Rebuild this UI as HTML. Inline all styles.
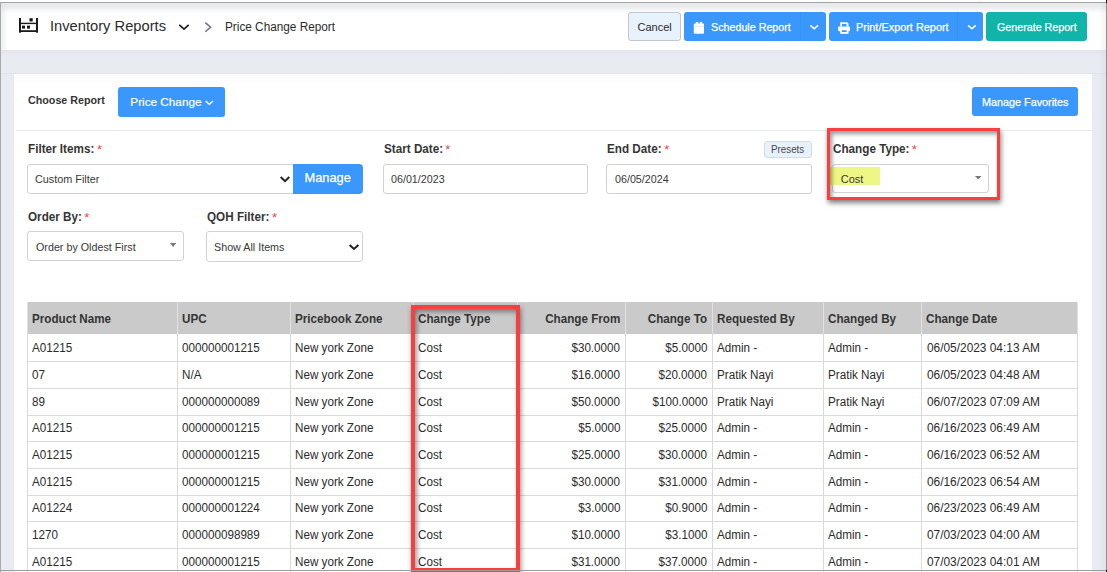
<!DOCTYPE html>
<html><head><meta charset="utf-8">
<style>
*{box-sizing:border-box;margin:0;padding:0}
html,body{width:1107px;height:572px;overflow:hidden;background:#fff}
body{position:relative;font-family:"Liberation Sans",sans-serif;color:#2b2b2b}
.a{position:absolute}
.t{position:absolute;white-space:nowrap;line-height:1}
</style></head><body>
<div class="a" style="left:0px;top:0px;width:1107px;height:572px;background:#fff"></div>
<div class="a" style="left:1px;top:50px;width:1105px;height:522px;background:linear-gradient(#e3e5ed,#e9ebf3 6px,#e9ebf3)"></div>
<div class="a" style="left:1px;top:73px;width:1105px;height:1px;background:#e2e4ea"></div>
<div class="a" style="left:14px;top:74px;width:1078px;height:498px;background:linear-gradient(#fbfbfc,#fff 12px)"></div>
<div class="a" style="left:1px;top:3px;width:1105px;height:10px;background:linear-gradient(rgba(232,234,236,1),rgba(233,234,236,.9) 40%,rgba(255,255,255,0))"></div>
<div class="a" style="left:1099px;top:3px;width:7px;height:567px;background:linear-gradient(90deg,rgba(255,255,255,0),rgba(200,202,206,.25))"></div>
<div class="a" style="left:1px;top:3px;width:7px;height:47px;background:linear-gradient(90deg,rgba(225,228,230,.6),rgba(255,255,255,0))"></div>
<svg class="a" style="left:14px;top:12px" width="30" height="26" viewBox="14 12 30 26">
  <rect x="19" y="18" width="2" height="14.7" fill="#1a1a1a"/>
  <rect x="36" y="18" width="2" height="14.7" fill="#1a1a1a"/>
  <rect x="19" y="22.7" width="19" height="1.4" fill="#1a1a1a"/>
  <rect x="19" y="30.2" width="19" height="1.8" fill="#1a1a1a"/>
  <rect x="29.5" y="18.2" width="3.2" height="3.3" fill="#1a1a1a"/>
  <rect x="22" y="25.6" width="3" height="3" fill="#1a1a1a"/>
  <rect x="27" y="25.6" width="3" height="3" fill="#1a1a1a"/>
</svg>
<div class="t" style="left:50.30px;top:18.00px;font-size:15px;font-weight:normal;color:#2b2b2b;transform:scaleX(0.98);transform-origin:0 0;">Inventory Reports</div>
<svg class="a" style="left:176px;top:21px" width="16" height="12" viewBox="176 21 16 12"><path d="M179.3 24.8 L184 29.2 L188.7 24.8" stroke="#1f1f1f" stroke-width="1.7" fill="none"/></svg>
<svg class="a" style="left:202px;top:20px" width="12" height="14" viewBox="202 20 12 14"><path d="M205.3 22.6 L210.6 27.2 L205.3 31.8" stroke="#6d7083" stroke-width="1.5" fill="none"/></svg>
<div class="t" style="left:225.00px;top:21.00px;font-size:12px;font-weight:normal;color:#2b2b2b;transform:scaleX(0.982);transform-origin:0 0;">Price Change Report</div>
<div class="a" style="left:628px;top:12px;width:53px;height:29px;background:#e8f2fc;border:1px solid #c3c7cc;border-radius:3px"></div>
<div class="t" style="left:637.50px;top:22.00px;font-size:11px;font-weight:normal;color:#2b2b2b;">Cancel</div>
<div class="a" style="left:684px;top:12px;width:142px;height:29px;background:#3a97fc;border-radius:3px"></div>
<svg class="a" style="left:690px;top:18px" width="20" height="20" viewBox="690 18 20 20"><rect x="693.8" y="23.6" width="10.2" height="10.2" rx="1" fill="#fff"/><rect x="695.8" y="22" width="2.4" height="3" fill="#fff"/><rect x="699.8" y="22" width="2.4" height="3" fill="#fff"/><rect x="693.8" y="25.8" width="10.2" height="0.7" fill="#cfe3fb"/></svg>
<div class="t" style="left:710.60px;top:22.00px;font-size:11px;font-weight:normal;color:#fff;transform:scaleX(0.974);transform-origin:0 0;-webkit-text-stroke:0.25px #fff">Schedule Report</div>
<div class="a" style="left:800px;top:12px;width:1px;height:29px;background:#3793f8"></div>
<svg class="a" style="left:806px;top:22px" width="16" height="10" viewBox="806 22 16 10"><path d="M810.4 25.4 L814.2 28.8 L818 25.4" stroke="#fff" stroke-width="1.5" fill="none"/></svg>
<div class="a" style="left:829px;top:12px;width:154px;height:29px;background:#3a97fc;border-radius:3px"></div>
<svg class="a" style="left:836px;top:20px" width="16" height="16" viewBox="836 20 16 16"><path d="M840.2 22.2 H847 L848.5 23.7 V26.5 H840.2 Z" fill="#fff"/><rect x="838.1" y="26.4" width="11.9" height="4.8" rx="1.2" fill="#fff"/><rect x="840.2" y="29.6" width="8.3" height="4.2" fill="#fff"/><rect x="841.9" y="24" width="4.6" height="2.3" fill="#3a97fc"/><rect x="841.9" y="30.2" width="4.7" height="1.8" fill="#3a97fc"/></svg>
<div class="t" style="left:855.60px;top:22.00px;font-size:11px;font-weight:normal;color:#fff;transform:scaleX(0.99);transform-origin:0 0;-webkit-text-stroke:0.25px #fff">Print/Export Report</div>
<div class="a" style="left:957px;top:12px;width:1px;height:29px;background:#3793f8"></div>
<svg class="a" style="left:964px;top:22px" width="16" height="10" viewBox="964 22 16 10"><path d="M968.1 25.4 L971.9 28.8 L975.7 25.4" stroke="#fff" stroke-width="1.5" fill="none"/></svg>
<div class="a" style="left:986px;top:12px;width:101px;height:29px;background:#11b4a9;border-radius:3px"></div>
<div class="t" style="left:996.80px;top:22.00px;font-size:11px;font-weight:normal;color:#fff;transform:scaleX(0.972);transform-origin:0 0;-webkit-text-stroke:0.25px #fff">Generate Report</div>
<div class="t" style="left:27.50px;top:95.00px;font-size:11px;font-weight:bold;color:#353535;transform:scaleX(0.975);transform-origin:0 0;">Choose Report</div>
<div class="a" style="left:118px;top:87px;width:107px;height:30px;background:#3a97fc;border-radius:3px"></div>
<div class="t" style="left:130.30px;top:96.00px;font-size:11.75px;font-weight:normal;color:#fff;-webkit-text-stroke:0.2px #fff">Price Change</div>
<svg class="a" style="left:202px;top:97px" width="14" height="10" viewBox="202 97 14 10"><path d="M205.6 101 L209.3 104.3 L213 101" stroke="#fff" stroke-width="1.4" fill="none"/></svg>
<div class="a" style="left:972px;top:87px;width:106px;height:29px;background:#3a97fc;border-radius:3px"></div>
<div class="t" style="left:981.80px;top:97.00px;font-size:11px;font-weight:normal;color:#fff;transform:scaleX(0.982);transform-origin:0 0;-webkit-text-stroke:0.25px #fff">Manage Favorites</div>
<div class="a" style="left:16px;top:130px;width:1076px;height:1px;background:#e8e9ee"></div>
<div class="t" style="left:27.50px;top:143.00px;font-size:12px;font-weight:bold;color:#353535;transform:scaleX(0.975);transform-origin:0 0;">Filter Items:<span style="color:#e64552;margin-left:2.6px;font-weight:normal;display:inline-block;transform:scale(1.12);transform-origin:50% 40%">*</span></div>
<div class="a" style="left:27px;top:164px;width:270px;height:30px;border:1px solid #d2d2d2;border-radius:3px;background:#fff;border-radius:3px 0 0 3px"></div>
<div class="t" style="left:35.00px;top:174.00px;font-size:11px;font-weight:normal;color:#383838;transform:scaleX(0.985);transform-origin:0 0;">Custom Filter</div>
<svg class="a" style="left:277px;top:172px" width="16" height="14" viewBox="277 172 16 14"><path d="M280.7 177 L285 181.2 L289.3 177" stroke="#222" stroke-width="2" fill="none"/></svg>
<div class="a" style="left:293px;top:164px;width:70px;height:30px;background:#3a97fc;border-radius:0 4px 4px 0"></div>
<div class="t" style="left:304.50px;top:172.00px;font-size:12.8px;font-weight:normal;color:#fff;-webkit-text-stroke:0.25px #fff">Manage</div>
<div class="t" style="left:384.20px;top:143.00px;font-size:12px;font-weight:bold;color:#353535;transform:scaleX(0.975);transform-origin:0 0;">Start Date:<span style="color:#e64552;margin-left:2.6px;font-weight:normal;display:inline-block;transform:scale(1.12);transform-origin:50% 40%">*</span></div>
<div class="a" style="left:383px;top:164px;width:205px;height:30px;border:1px solid #d2d2d2;border-radius:3px;background:#fff;"></div>
<div class="t" style="left:391.20px;top:174.00px;font-size:11px;font-weight:normal;color:#383838;transform:scaleX(0.975);transform-origin:0 0;">06/01/2023</div>
<div class="t" style="left:607.20px;top:143.00px;font-size:12px;font-weight:bold;color:#353535;transform:scaleX(0.975);transform-origin:0 0;">End Date:<span style="color:#e64552;margin-left:2.6px;font-weight:normal;display:inline-block;transform:scale(1.12);transform-origin:50% 40%">*</span></div>
<div class="a" style="left:764px;top:141px;width:48px;height:17px;background:#e8f2fc;border:1px solid #d3dbe3;border-radius:3px"></div>
<div class="t" style="left:771.00px;top:145.00px;font-size:10px;font-weight:normal;color:#4a4a4a;transform:scaleX(0.98);transform-origin:0 0;">Presets</div>
<div class="a" style="left:606px;top:164px;width:206px;height:30px;border:1px solid #d2d2d2;border-radius:3px;background:#fff;"></div>
<div class="t" style="left:615.00px;top:174.00px;font-size:11px;font-weight:normal;color:#383838;transform:scaleX(0.975);transform-origin:0 0;">06/05/2024</div>
<div class="t" style="left:833.00px;top:143.00px;font-size:12px;font-weight:bold;color:#353535;transform:scaleX(0.975);transform-origin:0 0;">Change Type:<span style="color:#e64552;margin-left:2.6px;font-weight:normal;display:inline-block;transform:scale(1.12);transform-origin:50% 40%">*</span></div>
<div class="a" style="left:832px;top:164px;width:157px;height:29px;border:1px solid #d2d2d2;border-radius:3px;background:#fff;"></div>
<div class="a" style="left:827px;top:167px;width:53px;height:18px;background:#eef785"></div>
<div class="t" style="left:840.80px;top:174.00px;font-size:11px;font-weight:normal;color:#383838;">Cost</div>
<svg class="a" style="left:975px;top:175.5px" width="6.5" height="3.5" viewBox="0 0 6.5 3.5"><path d="M0 0 H6.5 L3.25 3.5 Z" fill="#777"/></svg>
<div class="t" style="left:27.60px;top:211.00px;font-size:12px;font-weight:bold;color:#353535;transform:scaleX(0.975);transform-origin:0 0;">Order By:<span style="color:#e64552;margin-left:2.6px;font-weight:normal;display:inline-block;transform:scale(1.12);transform-origin:50% 40%">*</span></div>
<div class="a" style="left:27px;top:231px;width:157px;height:30px;border:1px solid #d2d2d2;border-radius:3px;background:#fff;"></div>
<div class="t" style="left:35.60px;top:242.00px;font-size:11px;font-weight:normal;color:#383838;transform:scaleX(0.976);transform-origin:0 0;">Order by Oldest First</div>
<svg class="a" style="left:170.3px;top:243px" width="6.199999999999989" height="4" viewBox="0 0 6.199999999999989 4"><path d="M0 0 H6.199999999999989 L3.0999999999999943 4 Z" fill="#777"/></svg>
<div class="t" style="left:206.50px;top:211.00px;font-size:12px;font-weight:bold;color:#353535;transform:scaleX(0.975);transform-origin:0 0;">QOH Filter:<span style="color:#e64552;margin-left:2.6px;font-weight:normal;display:inline-block;transform:scale(1.12);transform-origin:50% 40%">*</span></div>
<div class="a" style="left:206px;top:231px;width:157px;height:31px;border:1px solid #d2d2d2;border-radius:3px;background:#fff;"></div>
<div class="t" style="left:214.00px;top:242.00px;font-size:11px;font-weight:normal;color:#383838;transform:scaleX(0.976);transform-origin:0 0;">Show All Items</div>
<svg class="a" style="left:346px;top:239.5px" width="16" height="13.800000000000011" viewBox="346 239.5 16 13.800000000000011"><path d="M349.6 244.5 L354 248.5 L358.4 244.5" stroke="#222" stroke-width="2" fill="none"/></svg>
<div class="a" style="left:27px;top:302px;width:1051px;height:32px;background:#cacaca"></div>
<div class="a" style="left:27px;top:334px;width:1051px;height:238px;background:#fff"></div>
<div class="a" style="left:27px;top:361px;width:1051px;height:1px;background:#dadada"></div>
<div class="a" style="left:27px;top:388px;width:1051px;height:1px;background:#dadada"></div>
<div class="a" style="left:27px;top:415px;width:1051px;height:1px;background:#dadada"></div>
<div class="a" style="left:27px;top:441px;width:1051px;height:1px;background:#dadada"></div>
<div class="a" style="left:27px;top:468px;width:1051px;height:1px;background:#dadada"></div>
<div class="a" style="left:27px;top:495px;width:1051px;height:1px;background:#dadada"></div>
<div class="a" style="left:27px;top:521px;width:1051px;height:1px;background:#dadada"></div>
<div class="a" style="left:27px;top:548px;width:1051px;height:1px;background:#dadada"></div>
<div class="a" style="left:27px;top:575px;width:1051px;height:1px;background:#dadada"></div>
<div class="a" style="left:27px;top:334px;width:1px;height:240px;background:#dadada"></div>
<div class="a" style="left:27px;top:302px;width:1px;height:32px;background:#e1e1e1"></div>
<div class="a" style="left:177px;top:334px;width:1px;height:240px;background:#dadada"></div>
<div class="a" style="left:177px;top:302px;width:1px;height:32px;background:#e1e1e1"></div>
<div class="a" style="left:290px;top:334px;width:1px;height:240px;background:#dadada"></div>
<div class="a" style="left:290px;top:302px;width:1px;height:32px;background:#e1e1e1"></div>
<div class="a" style="left:413px;top:334px;width:1px;height:240px;background:#dadada"></div>
<div class="a" style="left:413px;top:302px;width:1px;height:32px;background:#e1e1e1"></div>
<div class="a" style="left:517px;top:334px;width:1px;height:240px;background:#dadada"></div>
<div class="a" style="left:517px;top:302px;width:1px;height:32px;background:#e1e1e1"></div>
<div class="a" style="left:625px;top:334px;width:1px;height:240px;background:#dadada"></div>
<div class="a" style="left:625px;top:302px;width:1px;height:32px;background:#e1e1e1"></div>
<div class="a" style="left:712px;top:334px;width:1px;height:240px;background:#dadada"></div>
<div class="a" style="left:712px;top:302px;width:1px;height:32px;background:#e1e1e1"></div>
<div class="a" style="left:823px;top:334px;width:1px;height:240px;background:#dadada"></div>
<div class="a" style="left:823px;top:302px;width:1px;height:32px;background:#e1e1e1"></div>
<div class="a" style="left:921px;top:334px;width:1px;height:240px;background:#dadada"></div>
<div class="a" style="left:921px;top:302px;width:1px;height:32px;background:#e1e1e1"></div>
<div class="a" style="left:1077px;top:334px;width:1px;height:240px;background:#dadada"></div>
<div class="a" style="left:1077px;top:302px;width:1px;height:32px;background:#e1e1e1"></div>
<div class="t" style="left:32.30px;top:313.00px;font-size:12px;font-weight:bold;color:#353535;transform:scaleX(0.972);transform-origin:0 0">Product Name</div>
<div class="t" style="left:182.30px;top:313.00px;font-size:12px;font-weight:bold;color:#353535;transform:scaleX(0.972);transform-origin:0 0">UPC</div>
<div class="t" style="left:295.30px;top:313.00px;font-size:12px;font-weight:bold;color:#353535;transform:scaleX(0.972);transform-origin:0 0">Pricebook Zone</div>
<div class="t" style="left:418.30px;top:313.00px;font-size:12px;font-weight:bold;color:#353535;transform:scaleX(0.972);transform-origin:0 0">Change Type</div>
<div class="t" style="right:486.60px;top:313.00px;font-size:12px;font-weight:bold;color:#353535;transform:scaleX(0.972);transform-origin:100% 0">Change From</div>
<div class="t" style="right:399.60px;top:313.00px;font-size:12px;font-weight:bold;color:#353535;transform:scaleX(0.972);transform-origin:100% 0">Change To</div>
<div class="t" style="left:717.30px;top:313.00px;font-size:12px;font-weight:bold;color:#353535;transform:scaleX(0.972);transform-origin:0 0">Requested By</div>
<div class="t" style="left:828.30px;top:313.00px;font-size:12px;font-weight:bold;color:#353535;transform:scaleX(0.972);transform-origin:0 0">Changed By</div>
<div class="t" style="left:926.30px;top:313.00px;font-size:12px;font-weight:bold;color:#353535;transform:scaleX(0.972);transform-origin:0 0">Change Date</div>
<div class="t" style="left:32.30px;top:342.00px;font-size:12px;font-weight:normal;color:#2b2b2b;transform:scaleX(0.972);transform-origin:0 0">A01215</div>
<div class="t" style="left:182.30px;top:342.00px;font-size:12px;font-weight:normal;color:#2b2b2b;transform:scaleX(0.972);transform-origin:0 0">000000001215</div>
<div class="t" style="left:295.30px;top:342.00px;font-size:12px;font-weight:normal;color:#2b2b2b;transform:scaleX(0.972);transform-origin:0 0">New york Zone</div>
<div class="t" style="left:418.30px;top:342.00px;font-size:12px;font-weight:normal;color:#2b2b2b;transform:scaleX(0.972);transform-origin:0 0">Cost</div>
<div class="t" style="right:486.60px;top:342.00px;font-size:12px;font-weight:normal;color:#2b2b2b;transform:scaleX(0.972);transform-origin:100% 0">$30.0000</div>
<div class="t" style="right:399.60px;top:342.00px;font-size:12px;font-weight:normal;color:#2b2b2b;transform:scaleX(0.972);transform-origin:100% 0">$5.0000</div>
<div class="t" style="left:717.30px;top:342.00px;font-size:12px;font-weight:normal;color:#2b2b2b;transform:scaleX(0.972);transform-origin:0 0">Admin -</div>
<div class="t" style="left:828.30px;top:342.00px;font-size:12px;font-weight:normal;color:#2b2b2b;transform:scaleX(0.972);transform-origin:0 0">Admin -</div>
<div class="t" style="left:927.20px;top:342.00px;font-size:12px;font-weight:normal;color:#2b2b2b;transform:scaleX(0.99);transform-origin:0 0">06/05/2023 04:13 AM</div>
<div class="t" style="left:32.30px;top:369.00px;font-size:12px;font-weight:normal;color:#2b2b2b;transform:scaleX(0.972);transform-origin:0 0">07</div>
<div class="t" style="left:182.30px;top:369.00px;font-size:12px;font-weight:normal;color:#2b2b2b;transform:scaleX(0.972);transform-origin:0 0">N/A</div>
<div class="t" style="left:295.30px;top:369.00px;font-size:12px;font-weight:normal;color:#2b2b2b;transform:scaleX(0.972);transform-origin:0 0">New york Zone</div>
<div class="t" style="left:418.30px;top:369.00px;font-size:12px;font-weight:normal;color:#2b2b2b;transform:scaleX(0.972);transform-origin:0 0">Cost</div>
<div class="t" style="right:486.60px;top:369.00px;font-size:12px;font-weight:normal;color:#2b2b2b;transform:scaleX(0.972);transform-origin:100% 0">$16.0000</div>
<div class="t" style="right:399.60px;top:369.00px;font-size:12px;font-weight:normal;color:#2b2b2b;transform:scaleX(0.972);transform-origin:100% 0">$20.0000</div>
<div class="t" style="left:717.30px;top:369.00px;font-size:12px;font-weight:normal;color:#2b2b2b;transform:scaleX(0.972);transform-origin:0 0">Pratik Nayi</div>
<div class="t" style="left:828.30px;top:369.00px;font-size:12px;font-weight:normal;color:#2b2b2b;transform:scaleX(0.972);transform-origin:0 0">Pratik Nayi</div>
<div class="t" style="left:927.20px;top:369.00px;font-size:12px;font-weight:normal;color:#2b2b2b;transform:scaleX(0.99);transform-origin:0 0">06/05/2023 04:48 AM</div>
<div class="t" style="left:32.30px;top:396.00px;font-size:12px;font-weight:normal;color:#2b2b2b;transform:scaleX(0.972);transform-origin:0 0">89</div>
<div class="t" style="left:182.30px;top:396.00px;font-size:12px;font-weight:normal;color:#2b2b2b;transform:scaleX(0.972);transform-origin:0 0">000000000089</div>
<div class="t" style="left:295.30px;top:396.00px;font-size:12px;font-weight:normal;color:#2b2b2b;transform:scaleX(0.972);transform-origin:0 0">New york Zone</div>
<div class="t" style="left:418.30px;top:396.00px;font-size:12px;font-weight:normal;color:#2b2b2b;transform:scaleX(0.972);transform-origin:0 0">Cost</div>
<div class="t" style="right:486.60px;top:396.00px;font-size:12px;font-weight:normal;color:#2b2b2b;transform:scaleX(0.972);transform-origin:100% 0">$50.0000</div>
<div class="t" style="right:399.60px;top:396.00px;font-size:12px;font-weight:normal;color:#2b2b2b;transform:scaleX(0.972);transform-origin:100% 0">$100.0000</div>
<div class="t" style="left:717.30px;top:396.00px;font-size:12px;font-weight:normal;color:#2b2b2b;transform:scaleX(0.972);transform-origin:0 0">Pratik Nayi</div>
<div class="t" style="left:828.30px;top:396.00px;font-size:12px;font-weight:normal;color:#2b2b2b;transform:scaleX(0.972);transform-origin:0 0">Pratik Nayi</div>
<div class="t" style="left:927.20px;top:396.00px;font-size:12px;font-weight:normal;color:#2b2b2b;transform:scaleX(0.99);transform-origin:0 0">06/07/2023 07:09 AM</div>
<div class="t" style="left:32.30px;top:422.00px;font-size:12px;font-weight:normal;color:#2b2b2b;transform:scaleX(0.972);transform-origin:0 0">A01215</div>
<div class="t" style="left:182.30px;top:422.00px;font-size:12px;font-weight:normal;color:#2b2b2b;transform:scaleX(0.972);transform-origin:0 0">000000001215</div>
<div class="t" style="left:295.30px;top:422.00px;font-size:12px;font-weight:normal;color:#2b2b2b;transform:scaleX(0.972);transform-origin:0 0">New york Zone</div>
<div class="t" style="left:418.30px;top:422.00px;font-size:12px;font-weight:normal;color:#2b2b2b;transform:scaleX(0.972);transform-origin:0 0">Cost</div>
<div class="t" style="right:486.60px;top:422.00px;font-size:12px;font-weight:normal;color:#2b2b2b;transform:scaleX(0.972);transform-origin:100% 0">$5.0000</div>
<div class="t" style="right:399.60px;top:422.00px;font-size:12px;font-weight:normal;color:#2b2b2b;transform:scaleX(0.972);transform-origin:100% 0">$25.0000</div>
<div class="t" style="left:717.30px;top:422.00px;font-size:12px;font-weight:normal;color:#2b2b2b;transform:scaleX(0.972);transform-origin:0 0">Admin -</div>
<div class="t" style="left:828.30px;top:422.00px;font-size:12px;font-weight:normal;color:#2b2b2b;transform:scaleX(0.972);transform-origin:0 0">Admin -</div>
<div class="t" style="left:927.20px;top:422.00px;font-size:12px;font-weight:normal;color:#2b2b2b;transform:scaleX(0.99);transform-origin:0 0">06/16/2023 06:49 AM</div>
<div class="t" style="left:32.30px;top:449.00px;font-size:12px;font-weight:normal;color:#2b2b2b;transform:scaleX(0.972);transform-origin:0 0">A01215</div>
<div class="t" style="left:182.30px;top:449.00px;font-size:12px;font-weight:normal;color:#2b2b2b;transform:scaleX(0.972);transform-origin:0 0">000000001215</div>
<div class="t" style="left:295.30px;top:449.00px;font-size:12px;font-weight:normal;color:#2b2b2b;transform:scaleX(0.972);transform-origin:0 0">New york Zone</div>
<div class="t" style="left:418.30px;top:449.00px;font-size:12px;font-weight:normal;color:#2b2b2b;transform:scaleX(0.972);transform-origin:0 0">Cost</div>
<div class="t" style="right:486.60px;top:449.00px;font-size:12px;font-weight:normal;color:#2b2b2b;transform:scaleX(0.972);transform-origin:100% 0">$25.0000</div>
<div class="t" style="right:399.60px;top:449.00px;font-size:12px;font-weight:normal;color:#2b2b2b;transform:scaleX(0.972);transform-origin:100% 0">$30.0000</div>
<div class="t" style="left:717.30px;top:449.00px;font-size:12px;font-weight:normal;color:#2b2b2b;transform:scaleX(0.972);transform-origin:0 0">Admin -</div>
<div class="t" style="left:828.30px;top:449.00px;font-size:12px;font-weight:normal;color:#2b2b2b;transform:scaleX(0.972);transform-origin:0 0">Admin -</div>
<div class="t" style="left:927.20px;top:449.00px;font-size:12px;font-weight:normal;color:#2b2b2b;transform:scaleX(0.99);transform-origin:0 0">06/16/2023 06:52 AM</div>
<div class="t" style="left:32.30px;top:476.00px;font-size:12px;font-weight:normal;color:#2b2b2b;transform:scaleX(0.972);transform-origin:0 0">A01215</div>
<div class="t" style="left:182.30px;top:476.00px;font-size:12px;font-weight:normal;color:#2b2b2b;transform:scaleX(0.972);transform-origin:0 0">000000001215</div>
<div class="t" style="left:295.30px;top:476.00px;font-size:12px;font-weight:normal;color:#2b2b2b;transform:scaleX(0.972);transform-origin:0 0">New york Zone</div>
<div class="t" style="left:418.30px;top:476.00px;font-size:12px;font-weight:normal;color:#2b2b2b;transform:scaleX(0.972);transform-origin:0 0">Cost</div>
<div class="t" style="right:486.60px;top:476.00px;font-size:12px;font-weight:normal;color:#2b2b2b;transform:scaleX(0.972);transform-origin:100% 0">$30.0000</div>
<div class="t" style="right:399.60px;top:476.00px;font-size:12px;font-weight:normal;color:#2b2b2b;transform:scaleX(0.972);transform-origin:100% 0">$31.0000</div>
<div class="t" style="left:717.30px;top:476.00px;font-size:12px;font-weight:normal;color:#2b2b2b;transform:scaleX(0.972);transform-origin:0 0">Admin -</div>
<div class="t" style="left:828.30px;top:476.00px;font-size:12px;font-weight:normal;color:#2b2b2b;transform:scaleX(0.972);transform-origin:0 0">Admin -</div>
<div class="t" style="left:927.20px;top:476.00px;font-size:12px;font-weight:normal;color:#2b2b2b;transform:scaleX(0.99);transform-origin:0 0">06/16/2023 06:54 AM</div>
<div class="t" style="left:32.30px;top:502.00px;font-size:12px;font-weight:normal;color:#2b2b2b;transform:scaleX(0.972);transform-origin:0 0">A01224</div>
<div class="t" style="left:182.30px;top:502.00px;font-size:12px;font-weight:normal;color:#2b2b2b;transform:scaleX(0.972);transform-origin:0 0">000000001224</div>
<div class="t" style="left:295.30px;top:502.00px;font-size:12px;font-weight:normal;color:#2b2b2b;transform:scaleX(0.972);transform-origin:0 0">New york Zone</div>
<div class="t" style="left:418.30px;top:502.00px;font-size:12px;font-weight:normal;color:#2b2b2b;transform:scaleX(0.972);transform-origin:0 0">Cost</div>
<div class="t" style="right:486.60px;top:502.00px;font-size:12px;font-weight:normal;color:#2b2b2b;transform:scaleX(0.972);transform-origin:100% 0">$3.0000</div>
<div class="t" style="right:399.60px;top:502.00px;font-size:12px;font-weight:normal;color:#2b2b2b;transform:scaleX(0.972);transform-origin:100% 0">$0.9000</div>
<div class="t" style="left:717.30px;top:502.00px;font-size:12px;font-weight:normal;color:#2b2b2b;transform:scaleX(0.972);transform-origin:0 0">Admin -</div>
<div class="t" style="left:828.30px;top:502.00px;font-size:12px;font-weight:normal;color:#2b2b2b;transform:scaleX(0.972);transform-origin:0 0">Admin -</div>
<div class="t" style="left:927.20px;top:502.00px;font-size:12px;font-weight:normal;color:#2b2b2b;transform:scaleX(0.99);transform-origin:0 0">06/23/2023 06:49 AM</div>
<div class="t" style="left:32.30px;top:529.00px;font-size:12px;font-weight:normal;color:#2b2b2b;transform:scaleX(0.972);transform-origin:0 0">1270</div>
<div class="t" style="left:182.30px;top:529.00px;font-size:12px;font-weight:normal;color:#2b2b2b;transform:scaleX(0.972);transform-origin:0 0">000000098989</div>
<div class="t" style="left:295.30px;top:529.00px;font-size:12px;font-weight:normal;color:#2b2b2b;transform:scaleX(0.972);transform-origin:0 0">New york Zone</div>
<div class="t" style="left:418.30px;top:529.00px;font-size:12px;font-weight:normal;color:#2b2b2b;transform:scaleX(0.972);transform-origin:0 0">Cost</div>
<div class="t" style="right:486.60px;top:529.00px;font-size:12px;font-weight:normal;color:#2b2b2b;transform:scaleX(0.972);transform-origin:100% 0">$10.0000</div>
<div class="t" style="right:399.60px;top:529.00px;font-size:12px;font-weight:normal;color:#2b2b2b;transform:scaleX(0.972);transform-origin:100% 0">$3.1000</div>
<div class="t" style="left:717.30px;top:529.00px;font-size:12px;font-weight:normal;color:#2b2b2b;transform:scaleX(0.972);transform-origin:0 0">Admin -</div>
<div class="t" style="left:828.30px;top:529.00px;font-size:12px;font-weight:normal;color:#2b2b2b;transform:scaleX(0.972);transform-origin:0 0">Admin -</div>
<div class="t" style="left:927.20px;top:529.00px;font-size:12px;font-weight:normal;color:#2b2b2b;transform:scaleX(0.99);transform-origin:0 0">07/03/2023 04:00 AM</div>
<div class="t" style="left:32.30px;top:556.00px;font-size:12px;font-weight:normal;color:#2b2b2b;transform:scaleX(0.972);transform-origin:0 0">A01215</div>
<div class="t" style="left:182.30px;top:556.00px;font-size:12px;font-weight:normal;color:#2b2b2b;transform:scaleX(0.972);transform-origin:0 0">000000001215</div>
<div class="t" style="left:295.30px;top:556.00px;font-size:12px;font-weight:normal;color:#2b2b2b;transform:scaleX(0.972);transform-origin:0 0">New york Zone</div>
<div class="t" style="left:418.30px;top:556.00px;font-size:12px;font-weight:normal;color:#2b2b2b;transform:scaleX(0.972);transform-origin:0 0">Cost</div>
<div class="t" style="right:486.60px;top:556.00px;font-size:12px;font-weight:normal;color:#2b2b2b;transform:scaleX(0.972);transform-origin:100% 0">$31.0000</div>
<div class="t" style="right:399.60px;top:556.00px;font-size:12px;font-weight:normal;color:#2b2b2b;transform:scaleX(0.972);transform-origin:100% 0">$37.0000</div>
<div class="t" style="left:717.30px;top:556.00px;font-size:12px;font-weight:normal;color:#2b2b2b;transform:scaleX(0.972);transform-origin:0 0">Admin -</div>
<div class="t" style="left:828.30px;top:556.00px;font-size:12px;font-weight:normal;color:#2b2b2b;transform:scaleX(0.972);transform-origin:0 0">Admin -</div>
<div class="t" style="left:927.20px;top:556.00px;font-size:12px;font-weight:normal;color:#2b2b2b;transform:scaleX(0.99);transform-origin:0 0">07/03/2023 04:01 AM</div>
<div class="a" style="left:827px;top:128px;width:173px;height:72px;border:3px solid #f73e41;box-shadow:1px 3px 5px rgba(0,0,0,.5), inset 2px 3px 4px rgba(0,0,0,.4)"></div>
<div class="a" style="left:411px;top:305px;width:109px;height:267px;border:4px solid #f73e41;box-shadow:1px 3px 5px rgba(0,0,0,.45), inset 2px 3px 5px rgba(0,0,0,.4)"></div>
<div class="a" style="left:0px;top:2px;width:1107px;height:1px;background:#a3a3a3"></div>
<div class="a" style="left:0px;top:2px;width:1px;height:570px;background:#a9a9a9"></div>
<div class="a" style="left:1106px;top:2px;width:1px;height:570px;background:#8f8f8f"></div>
<div class="a" style="left:0px;top:570px;width:1107px;height:1px;background:#9d9d9d"></div>
<div class="a" style="left:1106px;top:0px;width:1px;height:3px;background:#111"></div>
<div class="a" style="left:1106px;top:570px;width:1px;height:2px;background:#111"></div>
</body></html>
